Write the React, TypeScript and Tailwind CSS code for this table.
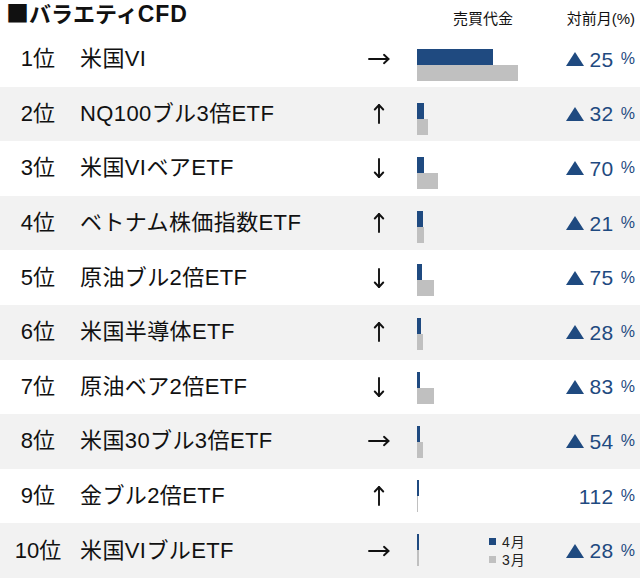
import React from 'react';

type Dir = 'right' | 'up' | 'down';

interface RankRow {
  rank: number;
  name: string;
  dir: Dir;
  cur: number;
  prev: number;
  pct: string;
  rise: boolean;
}

const rows: RankRow[] = [
  { rank: 1, name: '米国VI', dir: 'right', cur: 76, prev: 101, pct: '25', rise: true },
  { rank: 2, name: 'NQ100ブル3倍ETF', dir: 'up', cur: 7, prev: 11, pct: '32', rise: true },
  { rank: 3, name: '米国VIベアETF', dir: 'down', cur: 6.5, prev: 20.5, pct: '70', rise: true },
  { rank: 4, name: 'ベトナム株価指数ETF', dir: 'up', cur: 6, prev: 7, pct: '21', rise: true },
  { rank: 5, name: '原油ブル2倍ETF', dir: 'down', cur: 5.3, prev: 17, pct: '75', rise: true },
  { rank: 6, name: '米国半導体ETF', dir: 'up', cur: 3.7, prev: 5.7, pct: '28', rise: true },
  { rank: 7, name: '原油ベア2倍ETF', dir: 'down', cur: 2.7, prev: 17, pct: '83', rise: true },
  { rank: 8, name: '米国30ブル3倍ETF', dir: 'right', cur: 2.6, prev: 5.6, pct: '54', rise: true },
  { rank: 9, name: '金ブル2倍ETF', dir: 'up', cur: 2, prev: 1, pct: '112', rise: false },
  { rank: 10, name: '米国VIブルETF', dir: 'right', cur: 2, prev: 2, pct: '28', rise: true },
];

const Arrow: React.FC<{ dir: Dir }> = ({ dir }) => {
  if (dir === 'right') {
    return (
      <svg width="22" height="12" viewBox="0 0 22 12" fill="none" stroke="#111" strokeWidth="1.9" strokeLinecap="round" strokeLinejoin="round">
        <path d="M1 6h19.5" />
        <path d="M16 1.8L20.5 6 16 10.2" />
      </svg>
    );
  }
  return (
    <svg
      width="12"
      height="20"
      viewBox="0 0 12 20"
      fill="none"
      stroke="#111"
      strokeWidth="1.9"
      strokeLinecap="round"
      strokeLinejoin="round"
      className={dir === 'down' ? 'rotate-180' : ''}
    >
      <path d="M6 1v18" />
      <path d="M1.8 5.5L6 1l4.2 4.5" />
    </svg>
  );
};

const Triangle = () => (
  <svg width="18" height="14" viewBox="0 0 18 14">
    <path d="M9 0L18 14H0Z" fill="#1f4a80" />
  </svg>
);

export default function App() {
  return (
    <div
      className="w-[640px] h-[580px] bg-white text-[#111]"
      style={{ fontFamily: '"Liberation Sans", "Noto Sans CJK JP", sans-serif' }}
    >
      {/* header */}
      <div className="flex h-[32px]">
        <div className="flex-1 pl-[6px] text-[22px] font-bold leading-[24px] whitespace-nowrap">
          <span className="font-['Noto_Sans_CJK_JP'] text-[23px] leading-[24px]">■</span>バラエティ<span className="text-[23px] tracking-[1px]">CFD</span>
        </div>
        <div className="w-[76px] self-end pb-[6px] text-[15px] leading-[15px]">売買代金</div>
        <div className="w-[111px] self-end pr-[5px] pb-[6px] text-right text-[15px] leading-[15px]">対前月(%)</div>
      </div>

      {rows.map((r, i) => (
        <div key={r.rank} className={`flex h-[54.6px] items-center ${i % 2 === 1 ? 'bg-[#f2f2f2]' : ''}`}>
          <div className="w-[76px] text-center text-[22px] leading-none">{r.rank}位</div>
          <div className="w-[288px] pl-[4px] text-[22px] leading-none whitespace-nowrap tracking-[0.4px]">{r.name}</div>
          <div className="w-[30px] flex justify-center">
            <Arrow dir={r.dir} />
          </div>
          <div className="w-[23px]" />
          <div className="w-[72px] self-start" style={{ marginTop: 16.9 - 0.7 * i }}>
            <div className="h-[16px] bg-[#1f4a80]" style={{ width: r.cur }} />
            <div className="h-[16px] bg-[#c0c0c0]" style={{ width: r.prev }} />
          </div>
          <div className="w-[40px]">
            {r.rank === 10 && (
              <div className="text-[14px] leading-[18px] tracking-[1px] text-[#222]">
                <div className="flex items-center">
                  <span className="w-[7px] h-[7px] bg-[#1f4a80] mr-[6px]" />
                  4月
                </div>
                <div className="flex items-center">
                  <span className="w-[7px] h-[7px] bg-[#c0c0c0] mr-[6px]" />
                  3月
                </div>
              </div>
            )}
          </div>
          <div className="flex-1 pr-[5px] flex items-center justify-end text-[#1f4a80]">
            {r.rise && <Triangle />}
            <span className="ml-[5px] text-[21px] leading-none tracking-[0.5px]">{r.pct}</span>
            <span className="ml-[7px] text-[16px] leading-none">%</span>
          </div>
        </div>
      ))}
    </div>
  );
}
